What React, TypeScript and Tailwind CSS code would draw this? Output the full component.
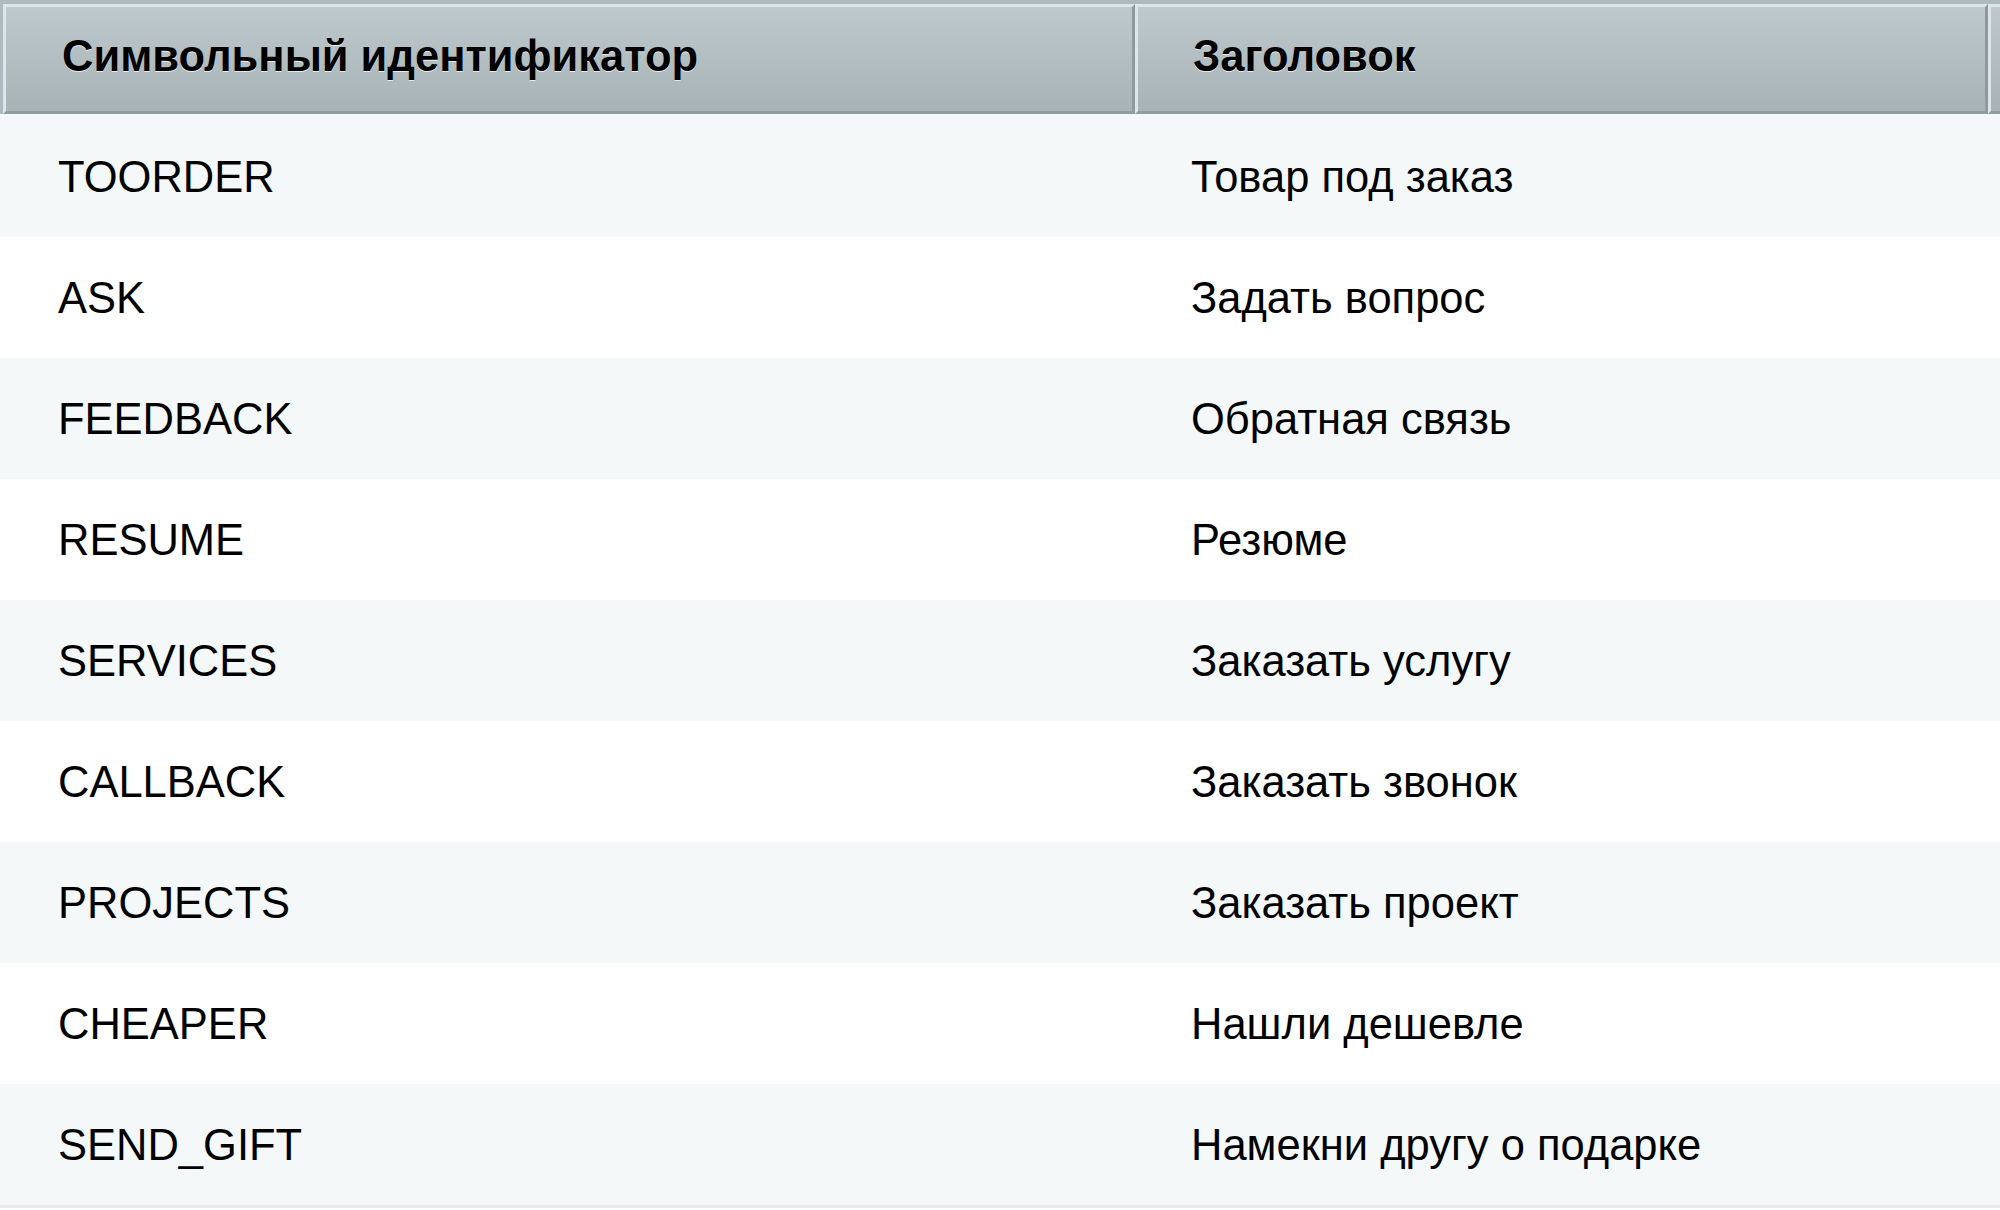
import React from "react";

const rows: [string, string][] = [
  ["TOORDER", "Товар под заказ"],
  ["ASK", "Задать вопрос"],
  ["FEEDBACK", "Обратная связь"],
  ["RESUME", "Резюме"],
  ["SERVICES", "Заказать услугу"],
  ["CALLBACK", "Заказать звонок"],
  ["PROJECTS", "Заказать проект"],
  ["CHEAPER", "Нашли дешевле"],
  ["SEND_GIFT", "Намекни другу о подарке"],
];

export default function App() {
  return (
    <div
      className="w-[2000px] h-[1210px] overflow-hidden bg-white text-black"
      style={{ fontFamily: '"Liberation Sans", Arial, sans-serif' }}
    >
      <div className="flex bg-[#adbac0] pt-[4px] pl-[3px] border-b-[2px] border-[#f7fafa]">
        <div className="w-[1132px] shrink-0 h-[110px] flex items-center pl-[56px] pb-[5px] border-l-[3px] border-t-[3px] border-r-[3px] border-b-[3px] border-l-[#dde5e8] border-t-[#dde5e8] border-r-[#8d9a9e] border-b-[#919ea1] bg-gradient-to-b from-[#bec9cd] to-[#a7b3b5] text-[43.5px] font-bold [text-shadow:0_1px_0_rgba(255,255,255,0.7)]">
          Символьный идентификатор
        </div>
        <div className="w-[853px] shrink-0 h-[110px] flex items-center pl-[55px] pb-[5px] border-l-[3px] border-t-[3px] border-r-[3px] border-b-[3px] border-l-[#dde5e8] border-t-[#dde5e8] border-r-[#8d9a9e] border-b-[#919ea1] bg-gradient-to-b from-[#bec9cd] to-[#a7b3b5] text-[43.5px] font-bold [text-shadow:0_1px_0_rgba(255,255,255,0.7)]">
          Заголовок
        </div>
        <div className="flex-1 h-[110px] border-l-[3px] border-t-[3px] border-b-[3px] border-l-[#dde5e8] border-t-[#dde5e8] border-b-[#919ea1] bg-gradient-to-b from-[#bec9cd] to-[#a7b3b5]" />
      </div>
      <div>
        {rows.map(([code, title], i) => (
          <div
            key={code}
            className={`flex h-[121px] items-center pt-[2px] text-[43.5px] ${i % 2 === 0 ? "bg-[#f4f8f9]" : "bg-white"}`}
          >
            <div className="w-[1135px] shrink-0 pl-[58px]">{code}</div>
            <div className="w-[853px] shrink-0 pl-[56px]">{title}</div>
          </div>
        ))}
      </div>
      <div className="h-[3px] bg-[#e8ebeb]" />
    </div>
  );
}
